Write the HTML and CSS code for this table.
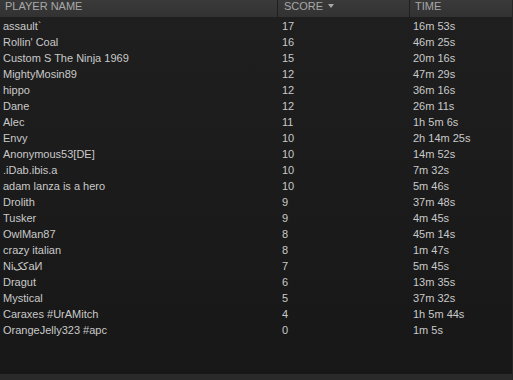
FILE: index.html
```html
<!DOCTYPE html>
<html>
<head>
<meta charset="utf-8">
<link rel="stylesheet" href="styles.css">
</head>
<body>
<div class="panel">
  <div class="head row">
    <div class="c name">PLAYER NAME</div>
    <div class="c score">SCORE <span class="arrow"></span></div>
    <div class="c time">TIME</div>
  </div>
  <div class="list">
    <div class="row"><div class="c name">assault`</div><div class="c score">17</div><div class="c time">16m 53s</div></div>
    <div class="row"><div class="c name">Rollin' Coal</div><div class="c score">16</div><div class="c time">46m 25s</div></div>
    <div class="row"><div class="c name">Custom S The Ninja 1969</div><div class="c score">15</div><div class="c time">20m 16s</div></div>
    <div class="row"><div class="c name">MightyMosin89</div><div class="c score">12</div><div class="c time">47m 29s</div></div>
    <div class="row"><div class="c name">hippo</div><div class="c score">12</div><div class="c time">36m 16s</div></div>
    <div class="row"><div class="c name">Dane</div><div class="c score">12</div><div class="c time">26m 11s</div></div>
    <div class="row"><div class="c name">Alec</div><div class="c score">11</div><div class="c time">1h 5m 6s</div></div>
    <div class="row"><div class="c name">Envy</div><div class="c score">10</div><div class="c time">2h 14m 25s</div></div>
    <div class="row"><div class="c name">Anonymous53[DE]</div><div class="c score">10</div><div class="c time">14m 52s</div></div>
    <div class="row"><div class="c name">.iDab.ibis.a</div><div class="c score">10</div><div class="c time">7m 32s</div></div>
    <div class="row"><div class="c name">adam lanza is a hero</div><div class="c score">10</div><div class="c time">5m 46s</div></div>
    <div class="row"><div class="c name">Drolith</div><div class="c score">9</div><div class="c time">37m 48s</div></div>
    <div class="row"><div class="c name">Tusker</div><div class="c score">9</div><div class="c time">4m 45s</div></div>
    <div class="row"><div class="c name">OwlMan87</div><div class="c score">8</div><div class="c time">45m 14s</div></div>
    <div class="row"><div class="c name">crazy italian</div><div class="c score">8</div><div class="c time">1m 47s</div></div>
    <div class="row"><div class="c name">Ni&#x6A9;&#x6A9;aИ</div><div class="c score">7</div><div class="c time">5m 45s</div></div>
    <div class="row"><div class="c name">Dragut</div><div class="c score">6</div><div class="c time">13m 35s</div></div>
    <div class="row"><div class="c name">Mystical</div><div class="c score">5</div><div class="c time">37m 32s</div></div>
    <div class="row"><div class="c name">Caraxes #UrAMitch</div><div class="c score">4</div><div class="c time">1h 5m 44s</div></div>
    <div class="row"><div class="c name">OrangeJelly323 #apc</div><div class="c score">0</div><div class="c time">1m 5s</div></div>
  </div>
  <div class="fill"></div>
  <div class="foot"></div>
</div>
</body>
</html>
```
FILE: styles.css
```css
html, body {
  margin: 0;
  padding: 0;
  height: 100%;
  background: #1c1c1c;
}
.panel {
  height: 380px;
  display: flex;
  flex-direction: column;
  font-family: "Liberation Sans", Arial, "Noto Sans", sans-serif;
  font-size: 11px;
  background: linear-gradient(#1f1f1f, #171717);
  border-right: 1px solid #262626;
  box-sizing: border-box;
}
.row {
  display: grid;
  grid-template-columns: 277px 132px 1fr;
  box-sizing: border-box;
  height: 16px;
  padding-top: 2px;
  line-height: 14px;
  color: #c9c9c9;
}
.c {
  white-space: nowrap;
  overflow: hidden;
}
.name { padding-left: 3px; }
.score { padding-left: 5px; }
.time { padding-left: 4px; }
.head {
  height: 17px;
  padding-top: 0;
  line-height: 13px;
  background: linear-gradient(#3a3a3a, #323232);
  color: #a8a8a8;
}
.head .c { height: 17px; }
.head .name { padding-left: 5px; }
.head .score { border-left: 1px solid #1f1f1f; padding-left: 6px; }
.head .time { border-left: 1px solid #1f1f1f; padding-left: 5px; }
.arrow {
  display: inline-block;
  width: 0;
  height: 0;
  margin-left: 2px;
  vertical-align: 2px;
  border-left: 3.5px solid transparent;
  border-right: 3.5px solid transparent;
  border-top: 4px solid #a8a8a8;
}
.fill { flex: 1; }
.foot {
  height: 6px;
  background: #2a2a2a;
}
```
